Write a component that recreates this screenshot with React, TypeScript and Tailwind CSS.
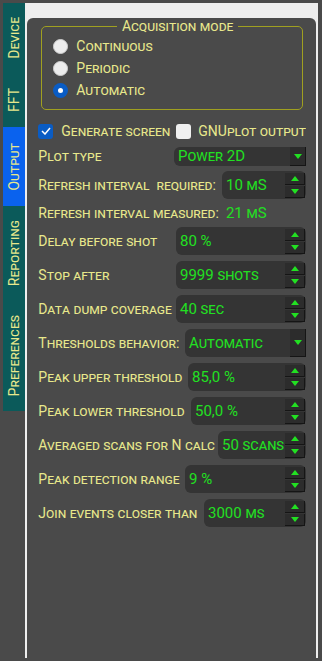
import React from 'react';

const font = "font-['Roboto','Liberation_Sans',sans-serif] [font-variant-caps:small-caps]";

function Arrow({ up }: { up?: boolean }) {
  return (
    <svg width="8" height="5" viewBox="0 0 8 5">
      <path d={up ? 'M0 5 L4 0 L8 5 Z' : 'M0 0 L8 0 L4 5 Z'} fill="#22e022" />
    </svg>
  );
}

function Spin({ w, value }: { w: string; value: string }) {
  return (
    <div className={`${w} h-[28px] shrink-0 flex items-center rounded-[6px] bg-[#343434] pl-[4px] pr-[1px]`}>
      <span className="flex-1 text-[15px] text-[#22e022] leading-none whitespace-nowrap">{value}</span>
      <div className="flex flex-col gap-[1px]">
        <div className="w-[20px] h-[12px] bg-[#2c2c2c] border-r border-b border-[#151515] flex items-center justify-center">
          <Arrow up />
        </div>
        <div className="w-[20px] h-[12px] bg-[#2c2c2c] border-r border-b border-[#151515] flex items-center justify-center">
          <Arrow />
        </div>
      </div>
    </div>
  );
}

function Combo({ w, h, value }: { w: string; h: string; value: string }) {
  return (
    <div className={`${w} ${h} shrink-0 flex items-stretch rounded-[6px] bg-[#343434] pl-[4px]`}>
      <span className="flex-1 self-center text-[15px] text-[#22e022] leading-none">{value}</span>
      <div className="w-[16px] bg-[#2c2c2c] border-r border-b border-[#151515] flex items-center justify-center">
        <Arrow />
      </div>
    </div>
  );
}

function Row({ label, children }: { label: string; children: React.ReactNode }) {
  return (
    <div className="flex items-center justify-between h-[28px]">
      <span className="whitespace-pre">{label}</span>
      {children}
    </div>
  );
}

function Radio({ checked, label }: { checked?: boolean; label: string }) {
  return (
    <div className="flex items-center h-[22px] gap-[8px]">
      {checked ? (
        <div className="w-[15px] h-[15px] rounded-full bg-[#0a5cc4] flex items-center justify-center">
          <div className="w-[5px] h-[5px] rounded-full bg-white" />
        </div>
      ) : (
        <div className="w-[15px] h-[15px] rounded-full bg-[#ececec] border border-[#cfcfcf]" />
      )}
      <span>{label}</span>
    </div>
  );
}

const tabs = [
  { name: 'Device', h: 'h-[69px]' },
  { name: 'FFT', h: 'h-[55px]' },
  { name: 'Output', h: 'h-[79px]', active: true },
  { name: 'Reporting', h: 'h-[95px]' },
  { name: 'Preferences', h: 'h-[110px]' },
];

export default function App() {
  return (
    <div className={`w-[322px] h-[661px] bg-[#4a4a4a] flex pt-[3px] pl-[3px] pr-[4px] pb-[3px] text-[14px] text-[#e8e88c] ${font}`}>
      {/* tabs */}
      <div className="w-[23px] flex flex-col">
        {tabs.map((t) => (
          <div
            key={t.name}
            className={`${t.h} flex items-center justify-center ${t.active ? 'bg-[#0a62ee]' : 'bg-[#0b5a5a]'}`}
          >
            <span className="[writing-mode:vertical-rl] rotate-180 leading-none">{t.name}</span>
          </div>
        ))}
      </div>

      {/* panel */}
      <div className="flex-1 bg-[#eeeeee] p-[2px]">
        <div className="h-full rounded-[6px] bg-[#4a4a4a] pl-[11px] pr-[10px]">
          <fieldset className="mt-[13px] mx-[3px] border border-[#a0a020] rounded-[5px] pl-[11px] pb-[8px]">
            <legend className="mx-auto px-[5px] leading-[17px]">Acquisition mode</legend>
            <Radio label="Continuous" />
            <Radio label="Periodic" />
            <Radio checked label="Automatic" />
          </fieldset>

          <div className="flex items-center mt-[13px] h-[16px]">
            <div className="w-[138px] shrink-0 flex items-center gap-[8px]">
              <div className="w-[15px] h-[15px] rounded-[3px] bg-[#0a5cc4] flex items-center justify-center">
                <svg width="10" height="8" viewBox="0 0 10 8">
                  <path d="M1 4 L4 7 L9 1" stroke="white" strokeWidth="1.5" fill="none" />
                </svg>
              </div>
              <span className="whitespace-nowrap">Generate screen</span>
            </div>
            <div className="flex-1 min-w-0 overflow-hidden flex items-center gap-[7px]">
              <div className="w-[15px] h-[15px] shrink-0 rounded-[3px] bg-[#f0f0f0]" />
              <span className="whitespace-nowrap">GNUplot output</span>
            </div>
          </div>

          <div className="flex items-center justify-between mt-[8px] h-[19px]">
            <span>Plot type</span>
            <Combo w="w-[132px]" h="h-[19px]" value="Power 2D" />
          </div>

          <div className="flex flex-col gap-[6px] mt-[5px]">
            <Row label="Refresh interval  required:">
              <Spin w="w-[84px]" value="10 mS" />
            </Row>
            <div className="flex items-center h-[16px]">
              <span>Refresh interval measured:</span>
              <span className="ml-[7px] text-[15px] text-[#22e022]">21 mS</span>
            </div>
            <Row label="Delay before shot">
              <Spin w="w-[130px]" value="80 %" />
            </Row>
            <Row label="Stop after">
              <Spin w="w-[130px]" value="9999 shots" />
            </Row>
            <Row label="Data dump coverage">
              <Spin w="w-[130px]" value="40 sec" />
            </Row>
            <Row label="Thresholds behavior:">
              <Combo w="w-[121px]" h="h-[28px]" value="Automatic" />
            </Row>
            <Row label="Peak upper threshold">
              <Spin w="w-[118px]" value="85,0 %" />
            </Row>
            <Row label="Peak lower threshold">
              <Spin w="w-[115px]" value="50,0 %" />
            </Row>
            <Row label="Averaged scans for N calc">
              <Spin w="w-[88px]" value="50 scans" />
            </Row>
            <Row label="Peak detection range">
              <Spin w="w-[121px]" value="9 %" />
            </Row>
            <Row label="Join events closer than">
              <Spin w="w-[102px]" value="3000 ms" />
            </Row>
          </div>
        </div>
      </div>
    </div>
  );
}
